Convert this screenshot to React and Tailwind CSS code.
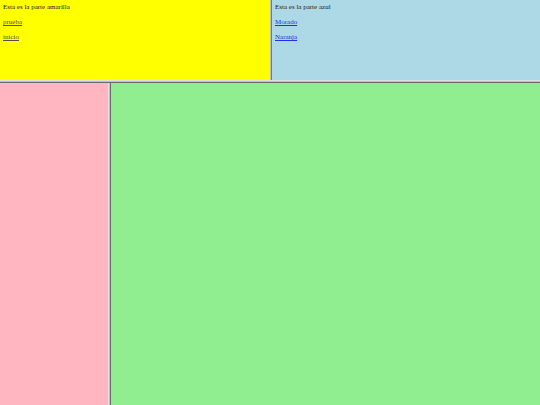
import React from "react";

const Frame = ({ className, title, links, linkColor }) => {
    return (
        <div className={"overflow-hidden px-[3px] pt-[3px] text-[7px] leading-[8px] text-[#222]" + " " + className}>
            <div>{title}</div>
            {links.map((l) => (
                <p key={l} className="mt-[7px]">
                    <a href="#" className={"underline " + linkColor}>{l}</a>
                </p>
            ))}
        </div>
    )
}

const App = () => {
    return (
        <div className="flex h-screen flex-col bg-[#c0c0c0]" style={{ fontFamily: '"Liberation Serif", "Times New Roman", serif' }}>
            <div className="flex h-[80px]">
                <Frame
                    className="w-[269px] bg-[#ffff00]"
                    title="Esta es la parte amarilla"
                    links={["prueba", "inicio"]}
                    linkColor="text-[#5a4a4a]"
                />
                <div className="w-[3px] border-l border-r border-l-[#e0e0e0] border-r-[#7a7a7a] bg-[#c0c0c0]"></div>
                <Frame
                    className="flex-1 bg-[#add8e6]"
                    title="Esta es la parte azul"
                    links={["Morado", "Naranja"]}
                    linkColor="text-[#2233dd]"
                />
            </div>
            <div className="h-[3px] border-t border-b border-t-[#e0e0e0] border-b-[#6b6b6b] bg-[#c0c0c0]"></div>
            <div className="flex flex-1">
                <div className="w-[108px] bg-[#ffb6c1]"></div>
                <div className="w-[3px] border-l border-r border-l-[#e0e0e0] border-r-[#6b6b6b] bg-[#c0c0c0]"></div>
                <div className="flex-1 bg-[#90ee90]"></div>
            </div>
        </div>
    )
}

export default App;
